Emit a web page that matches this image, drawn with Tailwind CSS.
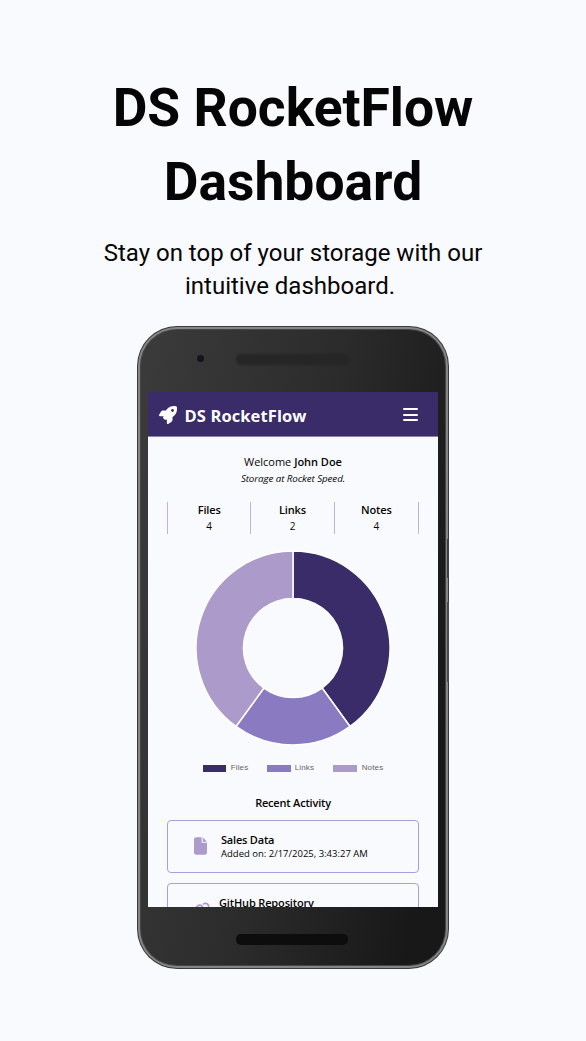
<!DOCTYPE html>
<html lang="en">
<head>
<meta charset="utf-8">
<title>DS RocketFlow Dashboard</title>
<script src="https://cdn.jsdelivr.net/npm/@tailwindcss/browser@4"></script>
</head>
<body class="h-[1041px] w-[586px] overflow-hidden bg-[#f9fafd] font-['Roboto',sans-serif] text-[#050505]">
<main class="flex flex-col items-center pt-[71px]">
  <h1 class="text-center text-[53.4px] leading-[74px] font-bold">DS RocketFlow<br>Dashboard</h1>
  <p class="mt-[18px] text-center text-[24px] leading-[33px]">Stay on top of your storage with our<br><span class="pr-[6px]">intuitive dashboard.</span></p>

  <div class="relative mt-[23px] h-[643px] w-[312px] rounded-[40px] bg-[#3a3a3a] p-px">
    <div class="h-full rounded-[39px] bg-[#858585] p-[2px]">
      <div class="h-full rounded-[37px] bg-[#454545] p-px">
        <div class="flex h-full flex-col rounded-[36px] bg-linear-[100deg,#3b3b3b_0%,#2b2b2b_50%,#181818_90%] px-[7px]">
          <div class="flex h-[62px] items-start">
            <div class="mt-[25px] ml-[49px] h-[7px] w-[7px] rounded-full bg-[#17131f]"></div>
            <div class="mt-[24px] ml-[32px] h-[11px] w-[113px] rounded-full bg-[#262626] blur-[1px]"></div>
          </div>

          <section class="h-[515px] w-[290px] shrink-0 overflow-hidden bg-[#f9fafd] font-['Open_Sans','Noto_Sans',sans-serif]">
            <header class="flex h-[45px] items-center border-b border-[#8b83a8] bg-[#392c68] pt-px pr-[20px] pl-[11px] text-white">
              <svg class="h-[18px] w-[18px]" viewBox="0 0 512 512" fill="currentColor"><path d="M156.600 384.900L125.700 354c-8.500-8.500-11.500-20.800-7.700-32.200c3-8.900 7-20.500 11.800-33.800L24 288c-8.600 0-16.600-4.600-20.900-12.100s-4.200-16.700.2-24.100l52.500-88.500c13-21.900 36.500-35.300 61.900-35.300l82.300 0c2.400-4 4.800-7.700 7.200-11.300C289.100-4.100 411.100-8.100 483.900 5.300c11.600 2.100 20.600 11.200 22.800 22.800c13.400 72.900 9.300 194.800-111.400 276.700c-3.500 2.400-7.300 4.800-11.300 7.200v82.300c0 25.400-13.400 49-35.300 61.900l-88.500 52.500c-7.400 4.400-16.600 4.500-24.100.2s-12.100-12.200-12.100-20.900V380.800c-14.100 4.900-26.400 8.900-35.700 11.900c-11.200 3.600-23.400.5-31.800-7.800zM384 168a40 40 0 1 0 0-80 40 40 0 1 0 0 80z"/></svg>
              <span class="mt-[2px] ml-[7.500px] text-[16.500px] leading-[22px] font-bold tracking-[0.100px] whitespace-nowrap">DS RocketFlow</span>
              <div class="ml-auto flex w-[15px] flex-col gap-[3.500px]">
                <span class="h-[2px] rounded-full bg-white"></span>
                <span class="h-[2px] rounded-full bg-white"></span>
                <span class="h-[2px] rounded-full bg-white"></span>
              </div>
            </header>

            <div class="flex flex-col items-center px-[19.500px]">
              <p class="mt-[17px] text-[11px] leading-[16px] tracking-[-0.020px]">Welcome <b class="font-semibold">John Doe</b></p>
              <p class="mt-[1.500px] text-[9.800px] leading-[14px] italic tracking-[-0.090px]">Storage at Rocket Speed.</p>

              <div class="mt-[16.500px] grid h-[32px] w-[252px] grid-cols-3 divide-x divide-[#bdb3e2] border-x border-[#bdb3e2] text-center">
                <div><div class="text-[11px] leading-[15px] font-semibold tracking-[-0.150px]">Files</div><div class="mt-[2px] text-[10px] leading-[15px]">4</div></div>
                <div><div class="text-[11px] leading-[15px] font-semibold tracking-[-0.150px]">Links</div><div class="mt-[2px] text-[10px] leading-[15px]">2</div></div>
                <div><div class="text-[11px] leading-[15px] font-semibold tracking-[-0.150px]">Notes</div><div class="mt-[2px] text-[10px] leading-[15px]">4</div></div>
              </div>

              <svg class="mt-[16px] h-[196px] w-[196px] shrink-0" viewBox="-98 -98 196 196" stroke="#fff" stroke-width="1.500" stroke-linejoin="bevel">
                <path fill="#392c68" d="M0-97A97 97 0 0 1 57.020 78.470L29.100 40.050A49.500 49.500 0 0 0 0-49.500z"/>
                <path fill="#897ac2" d="M57.020 78.470A97 97 0 0 1-57.020 78.470L-29.100 40.050A49.500 49.500 0 0 0 29.100 40.050z"/>
                <path fill="#ac9aca" d="M-57.020 78.470A97 97 0 0 1 0-97V-49.500A49.500 49.500 0 0 0-29.100 40.050z"/>
              </svg>

              <div class="mt-[17px] flex h-[10px] items-center font-['Liberation_Sans',sans-serif] text-[8px] leading-[10px] tracking-[0.150px] text-[#666]">
                <span class="h-[7px] w-[23px] bg-[#392c68]"></span><span class="ml-[5px] w-[36px]">Files</span>
                <span class="h-[7px] w-[24px] bg-[#897ac2]"></span><span class="ml-[4px] w-[38px]">Links</span>
                <span class="h-[7px] w-[24px] bg-[#ac9aca]"></span><span class="ml-[5px]">Notes</span>
              </div>

              <h2 class="mt-[22px] text-[11px] leading-[16px] font-semibold tracking-[-0.200px]">Recent Activity</h2>

              <div class="mt-[9px] flex h-[53px] w-[252px] shrink-0 items-center rounded-[4px] border border-[#a99ddb] pl-[26px]">
                <svg class="mb-[2px] h-[18px] w-[13px]" viewBox="0 0 384 512" fill="#ac9aca"><path d="M0 64C0 28.700 28.700 0 64 0H224V128c0 17.700 14.300 32 32 32H384V448c0 35.300-28.700 64-64 64H64c-35.300 0-64-28.700-64-64V64zm384 64H256V0L384 128z"/></svg>
                <div class="ml-[14px] whitespace-nowrap">
                  <div class="text-[11px] leading-[14px] font-semibold tracking-[-0.200px]">Sales Data</div>
                  <div class="text-[9.500px] leading-[13px]">Added on: 2/17/2025, 3:43:27 AM</div>
                </div>
              </div>

              <div class="mt-[10px] flex h-[53px] w-[252px] shrink-0 items-center rounded-[4px] border border-[#a99ddb] pl-[24px]">
                <svg class="mb-[2px] h-[18px] w-[18px]" viewBox="0 0 640 512" fill="#ac9aca"><path d="M579.800 267.700c56.500-56.500 56.500-148 0-204.500c-50-50-128.800-56.500-186.300-15.400l-1.600 1.100c-14.400 10.300-17.700 30.300-7.400 44.600s30.300 17.700 44.600 7.400l1.600-1.100c32.100-22.900 76-19.300 103.800 8.600c31.500 31.500 31.500 82.500 0 114L422.300 334.800c-31.500 31.500-82.500 31.500-114 0c-27.900-27.900-31.500-71.800-8.600-103.800l1.100-1.600c10.300-14.400 6.900-34.400-7.400-44.600s-34.400-6.900-44.600 7.400l-1.100 1.600C206.500 251.200 213 330 263 380c56.500 56.500 148 56.500 204.500 0L579.800 267.700zM60.200 244.300c-56.500 56.500-56.500 148 0 204.500c50 50 128.800 56.500 186.300 15.400l1.600-1.100c14.400-10.300 17.700-30.300 7.400-44.600s-30.300-17.700-44.600-7.400l-1.600 1.100c-32.100 22.900-76 19.300-103.800-8.600C74 372 74 321 105.500 289.500L217.700 177.200c31.500-31.500 82.500-31.500 114 0c27.900 27.900 31.500 71.800 8.600 103.900l-1.100 1.600c-10.300 14.400-6.900 34.400 7.400 44.600s34.400 6.900 44.600-7.400l1.100-1.600C433.500 260.800 427 182 377 132c-56.500-56.500-148-56.500-204.500 0L60.200 244.300z"/></svg>
                <div class="ml-[9px] whitespace-nowrap">
                  <div class="text-[11px] leading-[14px] font-semibold tracking-[-0.150px]">GitHub Repository</div>
                  <div class="text-[9.500px] leading-[13px]">Added on: 2/17/2025, 3:42:10 AM</div>
                </div>
              </div>
            </div>
          </section>

          <div class="flex h-[58px] justify-center pt-[27px]">
            <div class="mr-[2px] h-[11px] w-[112px] rounded-[5px] bg-[#0d0d0d] blur-[0.500px]"></div>
          </div>
        </div>
      </div>
    </div>
    <span class="absolute top-[213px] right-0 h-[39px] w-[2px] bg-[#3f3f3f]"></span>
    <span class="absolute top-[276px] right-0 h-[80px] w-[2px] bg-[#4b4b4b]"></span>
  </div>
</main>
</body>
</html>
